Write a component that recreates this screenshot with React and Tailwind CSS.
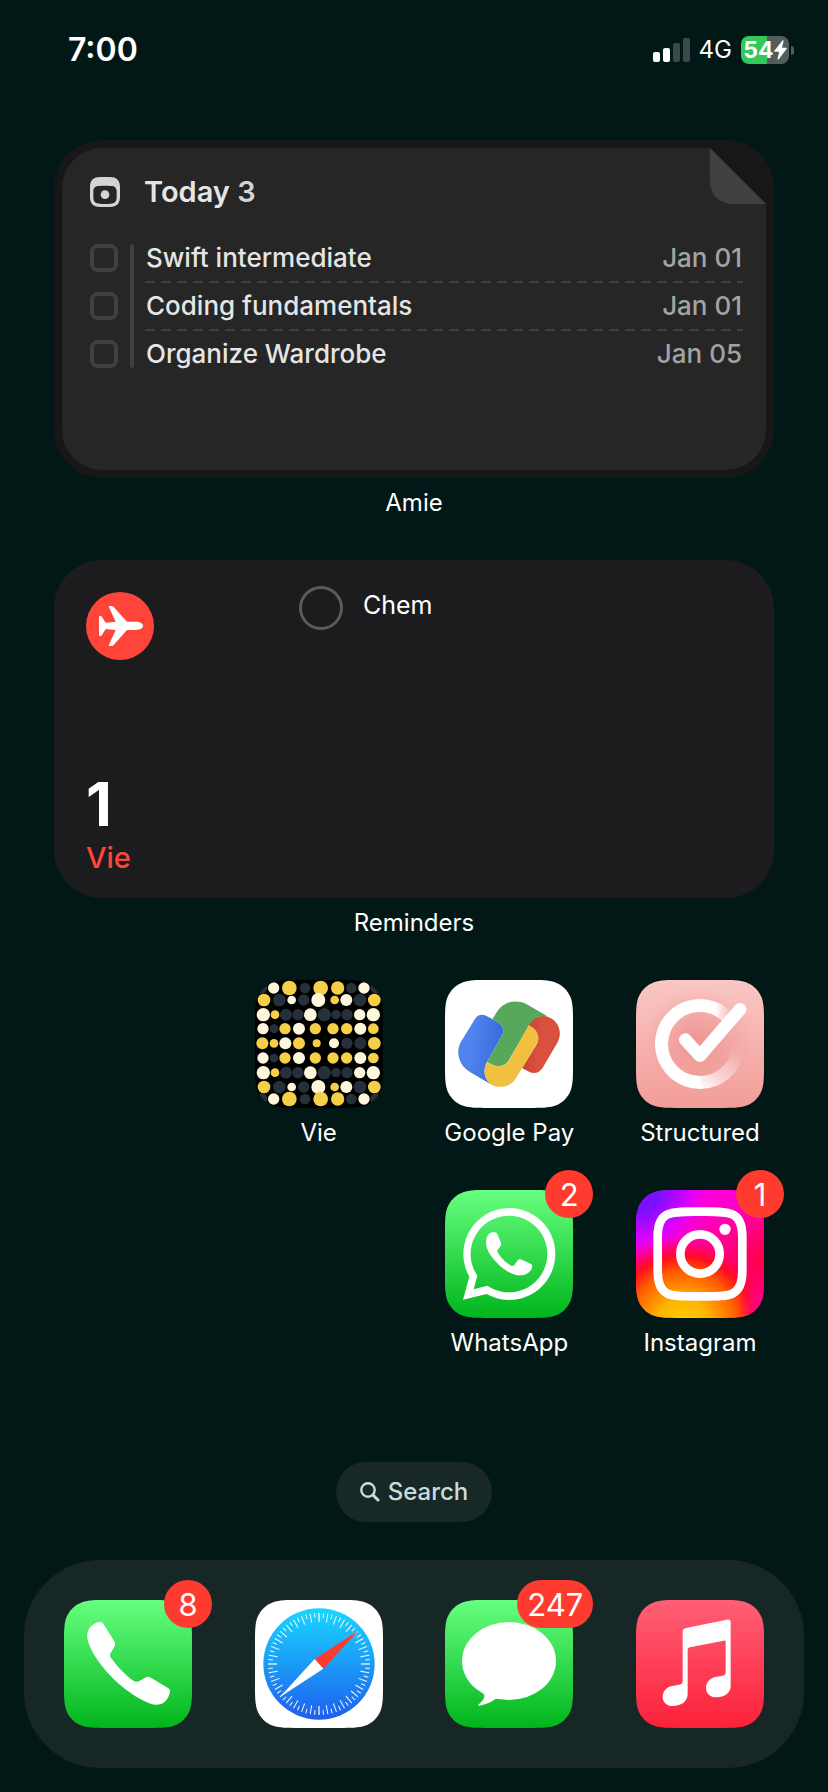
import React from "react";

/* Continuous-corner square, 384 units wide, used by every app icon. */
function smoothSquare(w, r) {
  const a = 1.528665 * r, b = 1.088493 * r, c = 0.868407 * r, d = 0.631494 * r;
  const e = 0.074911 * r, f = 0.372824 * r, g = 0.16906 * r;
  return [
    `M${a} 0H${w - a}`,
    `C${w - b} 0 ${w - c} 0 ${w - d} ${e}`,
    `C${w - f} ${g} ${w - g} ${f} ${w - e} ${d}`,
    `C${w} ${c} ${w} ${b} ${w} ${a}`,
    `V${w - a}`,
    `C${w} ${w - b} ${w} ${w - c} ${w - e} ${w - d}`,
    `C${w - g} ${w - f} ${w - f} ${w - g} ${w - d} ${w - e}`,
    `C${w - c} ${w} ${w - b} ${w} ${w - a} ${w}`,
    `H${a}`,
    `C${b} ${w} ${c} ${w} ${d} ${w - e}`,
    `C${f} ${w - g} ${g} ${w - f} ${e} ${w - d}`,
    `C0 ${w - c} 0 ${w - b} 0 ${w - a}`,
    `V${a}`,
    `C0 ${b} 0 ${c} ${e} ${d}`,
    `C${g} ${f} ${f} ${g} ${d} ${e}`,
    `C${c} 0 ${b} 0 ${a} 0Z`,
  ].join("");
}
const SHAPE = smoothSquare(384, 86);

function Tile({ id, top, bottom, x, y, children }) {
  return (
    <svg viewBox="0 0 384 384" className="block size-32" aria-hidden="true">
      <defs>
        <clipPath id={`${id}-clip`}><path d={SHAPE} /></clipPath>
        <linearGradient id={`${id}-bg`} x1="0" y1="0" x2="0" y2="1">
          <stop offset="0" stopColor={top} />
          <stop offset="1" stopColor={bottom} />
        </linearGradient>
      </defs>
      <g clipPath={`url(#${id}-clip)`}>
        <rect width="384" height="384" fill={`url(#${id}-bg)`} />
        <g transform={`translate(${-x} ${-y})`}>{children}</g>
      </g>
    </svg>
  );
}

const Y = "#f5cf47", W = "#fff7dc", N = "#25303b";
const ROW_A = [[62, 17, N], [98, 17, W], [145, 22, Y], [192, 16, N], [239, 22, Y], [290, 20, Y], [331, 16, N], [369, 17, W], [405, 17, N]];
const ROW_B = [[69, 19, Y], [115, 19, N], [152, 13, W], [188, 17, N], [232, 21, W], [281, 13, Y], [316, 18, W], [357, 19, N], [400, 19, Y]];
const ROW_C = [[67, 20, W], [102, 13, Y], [135, 18, N], [171, 17, N], [208, 19, W], [250, 20, N], [285, 14, N], [318, 17, N], [356, 17, W], [397, 20, W]];
const ROW_D = [[66, 17, W], [99, 13, N], [132, 17, Y], [174, 18, W], [223, 17, Y], [276, 17, Y], [317, 17, Y], [358, 18, W], [397, 16, Y]];
const ROW_E = [[64, 18, Y], [99, 13, Y], [133, 18, W], [174, 18, Y], [227, 12, Y], [279, 15, W], [318, 17, N], [358, 18, N], [400, 19, Y]];
const DOT_ROWS = [[69, ROW_A], [105, ROW_B], [149, ROW_C], [191, ROW_D], [235, ROW_E], [279, ROW_D], [323, ROW_C], [366, ROW_B], [402, ROW_A]];

const VieIcon = () => (
  <Tile id="vie" top="#000" bottom="#000" x={42} y={45}>
    {DOT_ROWS.map(([cy, row]) => row.map(([cx, r, c]) => <circle key={`${cx}-${cy}`} cx={cx} cy={cy} r={r} fill={c} />))}
  </Tile>
);

const GooglePayIcon = () => (
  <Tile id="gpay" top="#fff" bottom="#fff" x={48} y={45}>
    <defs>
      <linearGradient id="gpay-blue" x1="0" y1="0.4" x2="1" y2="0.6">
        <stop offset="0.3" stopColor="#5183ee" />
        <stop offset="1" stopColor="#3467d6" />
      </linearGradient>
      <linearGradient id="gpay-red" x1="0" y1="0.3" x2="1" y2="0.5">
        <stop offset="0" stopColor="#c8402f" />
        <stop offset="0.5" stopColor="#d9503f" />
      </linearGradient>
    </defs>
    <path fill="url(#gpay-blue)" d="M136 165C143 151 157 146 171 152L205 170C222 179 227 196 219 211L174 291C163 312 163 336 184 357L124 322C90 302 79 264 95 232Z" />
    <path fill="url(#gpay-red)" d="M299 181C312 155 340 147 363 158C391 172 400 203 386 232L341 308C332 323 316 328 300 320L279 309L322 240C333 220 330 198 299 181Z" />
    <path fill="#57a85a" d="M190 163L203 142C220 112 258 101 292 117L358 155C335 149 315 158 304 175L240 285C231 303 210 308 192 300L174 291L219 211C227 196 222 179 205 170Z" />
    <path fill="#f2c041" d="M299 181C328 195 334 218 323 238L262 338C248 364 213 373 188 359C166 346 160 316 174 291L192 300C210 308 231 303 240 287Z" />
  </Tile>
);

const StructuredIcon = () => (
  <Tile id="structured" top="#f9c7c4" bottom="#f39d98" x={48} y={45}>
    <defs>
      <linearGradient id="ring-top" gradientUnits="userSpaceOnUse" x1="285" y1="0" x2="335" y2="0">
        <stop offset="0" stopColor="#fff" />
        <stop offset="1" stopColor="#fff" stopOpacity="0" />
      </linearGradient>
      <linearGradient id="ring-end" gradientUnits="userSpaceOnUse" x1="240" y1="370" x2="355" y2="255">
        <stop offset="0" stopColor="#fff" />
        <stop offset="0.3" stopColor="#fff" stopOpacity="0.65" />
        <stop offset="1" stopColor="#fff" stopOpacity="0" />
      </linearGradient>
      <radialGradient id="ring-shade">
        <stop offset="0" stopColor="#e8837f" stopOpacity="0.6" />
        <stop offset="1" stopColor="#e8837f" stopOpacity="0" />
      </radialGradient>
    </defs>
    <circle cx="235" cy="225" r="160" fill="url(#ring-shade)" />
    <path d="M327 161A115.500 115.500 0 1 0 241 352.500" fill="none" stroke="url(#ring-top)" strokeWidth="39" />
    <path d="M240 352.500A115.500 115.500 0 0 0 354 255" fill="none" stroke="url(#ring-end)" strokeWidth="39" />
    <path d="M196 224L240 272L360 133" fill="none" stroke="#fff" strokeWidth="38" strokeLinecap="round" strokeLinejoin="round" />
  </Tile>
);

const WhatsAppIcon = () => (
  <Tile id="whatsapp" top="#67ff80" bottom="#00b51c" x={48} y={90}>
    <path fill="#fff" fillRule="evenodd" d="M102 419L121 350A138 138 0 1 1 173 402ZM145 347L134 388L175 377A115 115 0 1 0 145 347Z" />
    <path fill="#fff" d="M190 217C182 217 171 228 171 247C171 270 186 290 205 310C228 333 252 346 274 346C290 346 304 337 308 326C311 316 309 313 305 311L275 298C271 297 268 298 266 301L256 315C253 318 250 318 247 317C232 310 214 292 206 277C204 273 205 270 208 267L215 257C217 254 217 251 216 248L205 222C203 218 199 217 190 217Z" />
  </Tile>
);

const InstagramIcon = () => (
  <Tile id="instagram" top="#ff00d8" bottom="#ff0062" x={618} y={90}>
    <defs>
      <radialGradient id="ig-pink" gradientUnits="userSpaceOnUse" cx="1000" cy="300" r="190">
        <stop offset="0" stopColor="#ff0048" />
        <stop offset="1" stopColor="#ff0060" stopOpacity="0" />
      </radialGradient>
      <radialGradient id="ig-purple" gradientUnits="userSpaceOnUse" cx="620" cy="75" r="250">
        <stop offset="0.3" stopColor="#7a10ff" />
        <stop offset="0.65" stopColor="#dc00ff" />
        <stop offset="1" stopColor="#ff00d8" stopOpacity="0" />
      </radialGradient>
      <radialGradient id="ig-fire" gradientUnits="userSpaceOnUse" cx="760" cy="500" r="270">
        <stop offset="0" stopColor="#ffd500" />
        <stop offset="0.3" stopColor="#ffb400" />
        <stop offset="0.62" stopColor="#ff5a00" />
        <stop offset="0.78" stopColor="#ff0d20" />
        <stop offset="1" stopColor="#ff0060" stopOpacity="0" />
      </radialGradient>
      <radialGradient id="ig-corner" gradientUnits="userSpaceOnUse" cx="1010" cy="440" r="90">
        <stop offset="0" stopColor="#ff00b4" />
        <stop offset="1" stopColor="#ff0080" stopOpacity="0" />
      </radialGradient>
    </defs>
    <rect x="618" y="90" width="384" height="384" fill="url(#ig-pink)" />
    <rect x="618" y="90" width="384" height="384" fill="url(#ig-purple)" />
    <rect x="618" y="90" width="384" height="384" fill="url(#ig-fire)" />
    <rect x="618" y="90" width="384" height="384" fill="url(#ig-corner)" />
    <g fill="none" stroke="#fff" strokeWidth="26">
      <path d="M810 155C895 155 937 150 937 230V334C937 414 895 409 810 409C725 409 683 414 683 334V230C683 150 725 155 810 155Z" />
      <circle cx="810" cy="282" r="59" />
    </g>
    <circle cx="885" cy="208" r="17" fill="#fff" />
  </Tile>
);

const PhoneIcon = () => (
  <Tile id="phone" top="#67ff80" bottom="#00b51c" x={162} y={150}>
    <path fill="#fff" d="M238 235C248 222 262 216 270 216C276 216 279 219 281 223L314 275C317 280 316 284 313 290L302 309C299 315 300 319 303 323C322 350 346 375 370 392C376 396 381 396 387 394L408 382C413 380 418 380 423 383L474 414C480 418 481 423 479 430C476 442 469 453 459 460C440 469 420 462 395 449C330 415 262 345 238 285C230 265 229 248 238 235Z" />
  </Tile>
);

const TICKS = Array.from({ length: 72 }, (_, i) => i);
const SafariIcon = () => (
  <Tile id="safari" top="#fff" bottom="#fff" x={732} y={150}>
    <defs>
      <linearGradient id="safari-dial" x1="0" y1="0" x2="0" y2="1">
        <stop offset="0" stopColor="#19d7ff" />
        <stop offset="1" stopColor="#1e5fee" />
      </linearGradient>
    </defs>
    <circle cx="924" cy="342" r="167" fill="url(#safari-dial)" />
    {TICKS.map((i) => (
      <line
        key={i}
        x1="924"
        x2="924"
        y1="189"
        y2={i % 2 ? 203 : 216}
        stroke="#fff"
        strokeOpacity={i % 18 ? 0.95 : 0.6}
        strokeWidth={i % 18 ? 3 : 6}
        transform={`rotate(${i * 5} 924 342)`}
      />
    ))}
    <path fill="#ff3b30" d="M1042 242L937 356L911 327Z" />
    <path fill="#fff" d="M806 442L911 327L937 356Z" />
  </Tile>
);

const MessagesIcon = () => (
  <Tile id="messages" top="#67ff80" bottom="#00b51c" x={78} y={150}>
    <ellipse cx="270" cy="333" rx="141" ry="117" fill="#fff" />
    <path fill="#fff" d="M185 424C202 434 200 446 178 464C177 466 178 467 180 467C202 464 217 456 228 448C232 445 236 445 242 446L250 420Z" />
  </Tile>
);

const MusicIcon = () => (
  <Tile id="music" top="#ff5f76" bottom="#fb2139" x={648} y={150}>
    <path fill="#fff" d="M788 246C788 240 791 236 798 234L920 209C928 207 932 210 932 217V408C932 428 915 442 888 442C871 442 858 430 858 413C858 397 870 385 886 381L908 377C914 376 917 373 917 367V277C917 273 915 271 911 272L810 292C805 293 803 296 803 300V432C803 453 785 468 758 468C740 468 728 456 728 440C728 424 740 411 756 408L778 404C785 402 788 400 788 392Z" />
  </Tile>
);

const Badge = ({ children }) => (
  <span className="absolute -top-5 -right-5 flex h-12 min-w-12 items-center justify-center rounded-full bg-[#ff3b30] px-[10px] text-[31px] leading-none">
    {children}
  </span>
);

function AppButton({ name, icon, badge, hideLabel, className = "" }) {
  return (
    <button type="button" aria-label={name} className={`flex w-32 flex-col items-center ${className}`}>
      <span className="relative block">
        {icon}
        {badge && <Badge>{badge}</Badge>}
      </span>
      {!hideLabel && <span className="text-2xl leading-[50px] whitespace-nowrap">{name}</span>}
    </button>
  );
}

function StatusBar() {
  return (
    <header className="flex h-[100px] items-center justify-between pr-[34px] pl-[68px]">
      <time className="text-[32px] font-semibold">7:00</time>
      <div className="flex items-center gap-[9px]">
        <svg width="37" height="24" viewBox="0 0 37 24" fill="#fff" role="img" aria-label="Signal">
          <rect x="0" y="14" width="7" height="10" rx="2" />
          <rect x="10" y="10" width="7" height="14" rx="2" />
          <rect x="20" y="5" width="7" height="19" rx="2" fillOpacity="0.22" />
          <rect x="30" y="0" width="7" height="24" rx="2" fillOpacity="0.22" />
        </svg>
        <span className="text-2xl">4G</span>
        <div className="flex items-center gap-[2px]">
          <div className="flex h-7 w-12 items-center justify-center rounded-lg bg-linear-to-r from-[#34c759] from-54% to-[#525e5d] to-54%">
            <span className="text-[23px] font-bold">54</span>
            <svg width="13" height="20" viewBox="0 0 13 20" fill="#fff" aria-hidden="true">
              <path d="M8.500 0.500L0.500 10.500C0 11.200 0.300 11.700 1 11.700H5.200L3.600 18.800C3.500 19.700 4.200 20 4.800 19.300L12.500 9C13 8.300 12.700 7.800 12 7.800H8L9.600 1.100C9.800 0.200 9 -0.100 8.500 0.500Z" />
            </svg>
          </div>
          <span className="h-[9px] w-[3px] rounded-r-full bg-[#525e5d]" />
        </div>
      </div>
    </header>
  );
}

const TASKS = [
  { id: "swift", title: "Swift intermediate", date: "Jan 01" },
  { id: "coding", title: "Coding fundamentals", date: "Jan 01" },
  { id: "wardrobe", title: "Organize Wardrobe", date: "Jan 05" },
];

function AmieWidget() {
  return (
    <section className="flex flex-col items-center">
      <div className="h-[338px] w-full overflow-hidden rounded-[48px] bg-[#171717] p-2">
        <div className="relative h-full overflow-hidden rounded-[40px] rounded-tr-none bg-[#262626] pt-5 pr-[23px] pl-7">
          <svg width="56" height="56" viewBox="0 0 56 56" className="absolute top-0 right-0" aria-hidden="true">
            <path d="M0 0H56V56Z" fill="#171717" />
            <path d="M0 0V32C0 47 9 56 24 56H56Z" fill="#404040" />
          </svg>
          <div className="flex h-12 items-center gap-6">
            <svg width="30" height="30" viewBox="0 0 90 90" aria-hidden="true">
              <path fill="#d4d4d4" fillRule="evenodd" d="M30 0H60C80 0 90 10 90 30V60C90 80 80 90 60 90H30C10 90 0 80 0 60V30C0 10 10 0 30 0ZM28 27C15 27 10 33 10 44V60C10 74 16 80 29 80C39 81 51 81 61 80C74 80 80 74 80 60V44C80 33 75 27 62 27C51 26 39 26 28 27Z" />
              <circle cx="45" cy="53" r="13" fill="#d4d4d4" />
            </svg>
            <h2 className="text-[29px] font-semibold text-[#e5e5e5]">
              Today <span className="text-[#d4d4d4]">3</span>
            </h2>
          </div>
          <ul className="mt-[18px]">
            {TASKS.map((t, i) => (
              <li key={t.id} className="flex h-12 items-center">
                <input id={t.id} type="checkbox" className="size-7 shrink-0 appearance-none rounded-lg border-4 border-[#404040]" />
                <span className={`ml-3 w-1 shrink-0 bg-[#404040] ${i === 0 ? "h-[38px] self-end rounded-t-full" : i === 2 ? "h-[38px] self-start rounded-b-full" : "h-12"}`} />
                <span className="relative ml-[11px] flex h-12 flex-1 items-center justify-between pr-px pb-px pl-px text-[26px] font-medium">
                  <label htmlFor={t.id} className="text-[#e5e5e5]">{t.title}</label>
                  <span className="text-[#a3a3a3]">{t.date}</span>
                  {i < 2 && (
                    <span className="absolute right-0 -bottom-px left-0 h-[2px] bg-[repeating-linear-gradient(90deg,#404040_0_10px,transparent_10px_16px)]" />
                  )}
                </span>
              </li>
            ))}
          </ul>
        </div>
      </div>
      <h3 className="text-2xl leading-[50px]">Amie</h3>
    </section>
  );
}

function RemindersWidget() {
  return (
    <section className="flex flex-col items-center">
      <div className="flex h-[338px] w-full rounded-[48px] bg-[#1c1c1e] px-8">
        <div className="flex w-[213px] shrink-0 flex-col justify-between pt-8 pb-4">
          <svg width="68" height="68" viewBox="138 126 204 204" aria-hidden="true">
            <circle cx="240" cy="228" r="102" fill="#ff453a" />
            <path fill="#fff" d="M309 227.500C309 235 300 240 288 240H261L221 285C219 287 217 288 214 288H209C206 288 206 286 207 284L227 240L197 237L186 255C184 258 182 258 180 258C178 258 177 257 177 255V201C177 199 178 198 180 198C183 198 184 198 186 201L197 218L227 215L207 172C206 170 206 168 209 168H214C217 168 219 169 221 171L261 215H288C300 215 309 220 309 227.500Z" />
          </svg>
          <div>
            <p className="text-[60px] leading-[60px] font-bold">1</p>
            <p className="text-[29px] leading-[48px] font-medium text-[#ff453a]">Vie</p>
          </div>
        </div>
        <div className="flex flex-1 items-center gap-5 self-start pt-[26px]">
          <input id="chem" type="checkbox" className="size-11 shrink-0 appearance-none rounded-full border-3 border-[#5b5b5e]" />
          <label htmlFor="chem" className="pb-1 text-[25px]">Chem</label>
        </div>
      </div>
      <h3 className="text-2xl leading-[50px]">Reminders</h3>
    </section>
  );
}

export default function App() {
  return (
    <div className="flex min-h-screen flex-col bg-[#021817] font-['Inter','Liberation_Sans',sans-serif] text-white">
      <StatusBar />
      <main className="flex flex-1 flex-col gap-8 pt-10">
        <div className="flex flex-col gap-8 px-[54px]">
          <AmieWidget />
          <RemindersWidget />
        </div>
        <div className="grid grid-cols-[repeat(4,128px)] justify-between gap-y-8 px-16">
          <AppButton name="Vie" icon={<VieIcon />} className="col-start-2" />
          <AppButton name="Google Pay" icon={<GooglePayIcon />} />
          <AppButton name="Structured" icon={<StructuredIcon />} />
          <AppButton name="WhatsApp" icon={<WhatsAppIcon />} badge="2" className="col-start-3" />
          <AppButton name="Instagram" icon={<InstagramIcon />} badge="1" />
        </div>
        <button type="button" className="mt-auto flex h-[60px] items-center gap-2 self-center rounded-full bg-[#172827] px-6 text-2xl font-medium text-[#c8dddb]">
          <svg width="20" height="20" viewBox="0 0 20 20" fill="none" stroke="currentColor" aria-hidden="true">
            <circle cx="8" cy="8" r="6.700" strokeWidth="2.400" />
            <path d="M13 13L18 18" strokeWidth="3" strokeLinecap="round" />
          </svg>
          Search
        </button>
      </main>
      <nav aria-label="Dock" className="mx-6 mt-[38px] mb-6 flex justify-between rounded-[76px] bg-[#172726] p-10">
        <AppButton name="Phone" icon={<PhoneIcon />} badge="8" hideLabel />
        <AppButton name="Safari" icon={<SafariIcon />} hideLabel />
        <AppButton name="Messages" icon={<MessagesIcon />} badge="247" hideLabel />
        <AppButton name="Music" icon={<MusicIcon />} hideLabel />
      </nav>
    </div>
  );
}
